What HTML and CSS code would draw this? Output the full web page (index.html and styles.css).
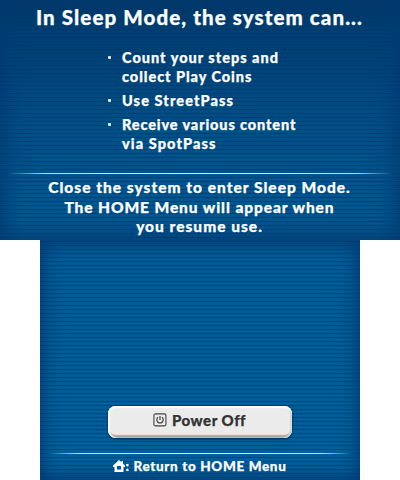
FILE: index.html
```html
<!DOCTYPE html>
<html lang="en">
<head>
<meta charset="utf-8">
<title>Sleep Mode</title>
<link rel="stylesheet" href="styles.css">
</head>
<body>
<main class="console">
  <section class="screen upper">
    <h1><span class="t0">In Sleep Mode, the system can...</span></h1>
    <ul>
      <li><span class="t1">Count your steps and</span><br><span class="t2">collect Play Coins</span></li>
      <li><span class="t3">Use StreetPass</span></li>
      <li><span class="t4">Receive various content</span><br><span class="t5">via SpotPass</span></li>
    </ul>
    <div class="rule"></div>
    <p><span class="t6">Close the system to enter Sleep Mode.</span><br><span class="t7">The HOME Menu will appear when</span><br><span class="t8">you resume use.</span></p>
  </section>
  <section class="screen lower">
    <button class="power">
      <svg width="14" height="14" viewBox="0 0 14 14" fill="none" stroke="#444"><rect x=".9" y=".9" width="12" height="12" rx="1.5" stroke-width="1.1"/><path d="M5 4.300a3.200 3.200 0 1 0 4 0M7 3v4" stroke-width="1.200"/></svg>
      <span class="t9">Power Off</span>
    </button>
    <div class="rule"></div>
    <footer>
      <svg width="12" height="12" viewBox="0 0 12 12"><path d="M6 0 0 5.500V7h1.500v5h9V7H12V5.500L10 3.700V1H8.500v1.300zM4 6h4v3.500H4z" fill="#fff" fill-rule="evenodd"/></svg>
      <span class="t10">: Return to HOME Menu</span>
    </footer>
  </section>
</main>
</body>
</html>
```
FILE: styles.css
```css
* { box-sizing: border-box; }
body { margin: 0; background: #fff; font-family: Lato, "Open Sans", sans-serif; font-weight: 900; color: #fff; -webkit-text-stroke: .25px; }
.console { display: flex; flex-direction: column; align-items: center; width: 400px; height: 480px; }
.screen { display: flex; flex-direction: column; height: 240px; }
.upper {
  width: 400px;
  background:
    linear-gradient(#003868, rgba(0,60,112,.6) 30px, transparent 110px),
    repeating-linear-gradient(transparent 0 1px, rgba(0,48,105,.62) 1px 2px, transparent 2px 4px),
    linear-gradient(#003f70, #004a80 35%, #00528b 65%, #005893);
  box-shadow: inset 0 0 22px 4px #003a70;
}
.lower {
  width: 320px;
  background:
    repeating-linear-gradient(transparent 0 1px, rgba(0,48,105,.62) 1px 2px, transparent 2px 4px),
    linear-gradient(#005a96, #005f9d);
  box-shadow: inset 0 0 18px 3px #003a70;
}
h1 { margin: 0; height: 48px; padding: 5px 2px 0 0; font-size: 20.5px; line-height: 24px; text-align: center; font-weight: 900; white-space: nowrap; }
ul { margin: 0; padding: 0 0 0 122px; list-style: none; height: 125px; font-size: 14.5px; line-height: 19px; white-space: nowrap; }
li { position: relative; margin-bottom: 5px; }
li::before { content: ""; position: absolute; left: -14px; top: 8px; width: 3px; height: 3px; background: #fff; border-radius: 1px; opacity: .9; }
.rule { height: 1px; margin: 0 6px; flex: none; background: linear-gradient(90deg, transparent, #b8dcf5 10%, #d8edfa 50%, #b8dcf5 90%, transparent); }
p { margin: 0; padding: 4px 2px 0 0; font-size: 15.5px; line-height: 19.5px; text-align: center; white-space: nowrap; }
.t0 { letter-spacing: 1.09px; margin-right: -1px; }
.t1 { letter-spacing: 1px; }
.t2 { letter-spacing: .95px; }
.t3 { letter-spacing: 1.1px; }
.t4 { letter-spacing: .87px; }
.t5 { letter-spacing: 1.1px; }
.t6 { letter-spacing: 1px; margin-right: -1px; }
.t7 { letter-spacing: .9px; margin-right: -1px; }
.t8 { letter-spacing: 1px; margin-right: -1px; }
.t9 { letter-spacing: .5px; }
.t10 { letter-spacing: .65px; }
.power {
  display: flex; align-items: center; justify-content: center; gap: 5px;
  width: 184px; height: 32px; margin: 166px auto 15px; padding: 0 1px 4px 0;
  border: 0; border-radius: 8px; background: #ebebeb; color: #333;
  font: 900 15px/20px Lato, sans-serif; white-space: nowrap;
  box-shadow: inset 0 2px 1px #fff, inset 2px 0 1px #f8f8f8, inset -2px 0 1px #d5d5d5, inset 0 -3px 1px #aaa, 0 1px 3px #002b55;
}
footer { display: flex; align-items: center; justify-content: center; gap: 1px; padding: 3px 1px 0 0; font-size: 13.5px; line-height: 18px; white-space: nowrap; }
```
